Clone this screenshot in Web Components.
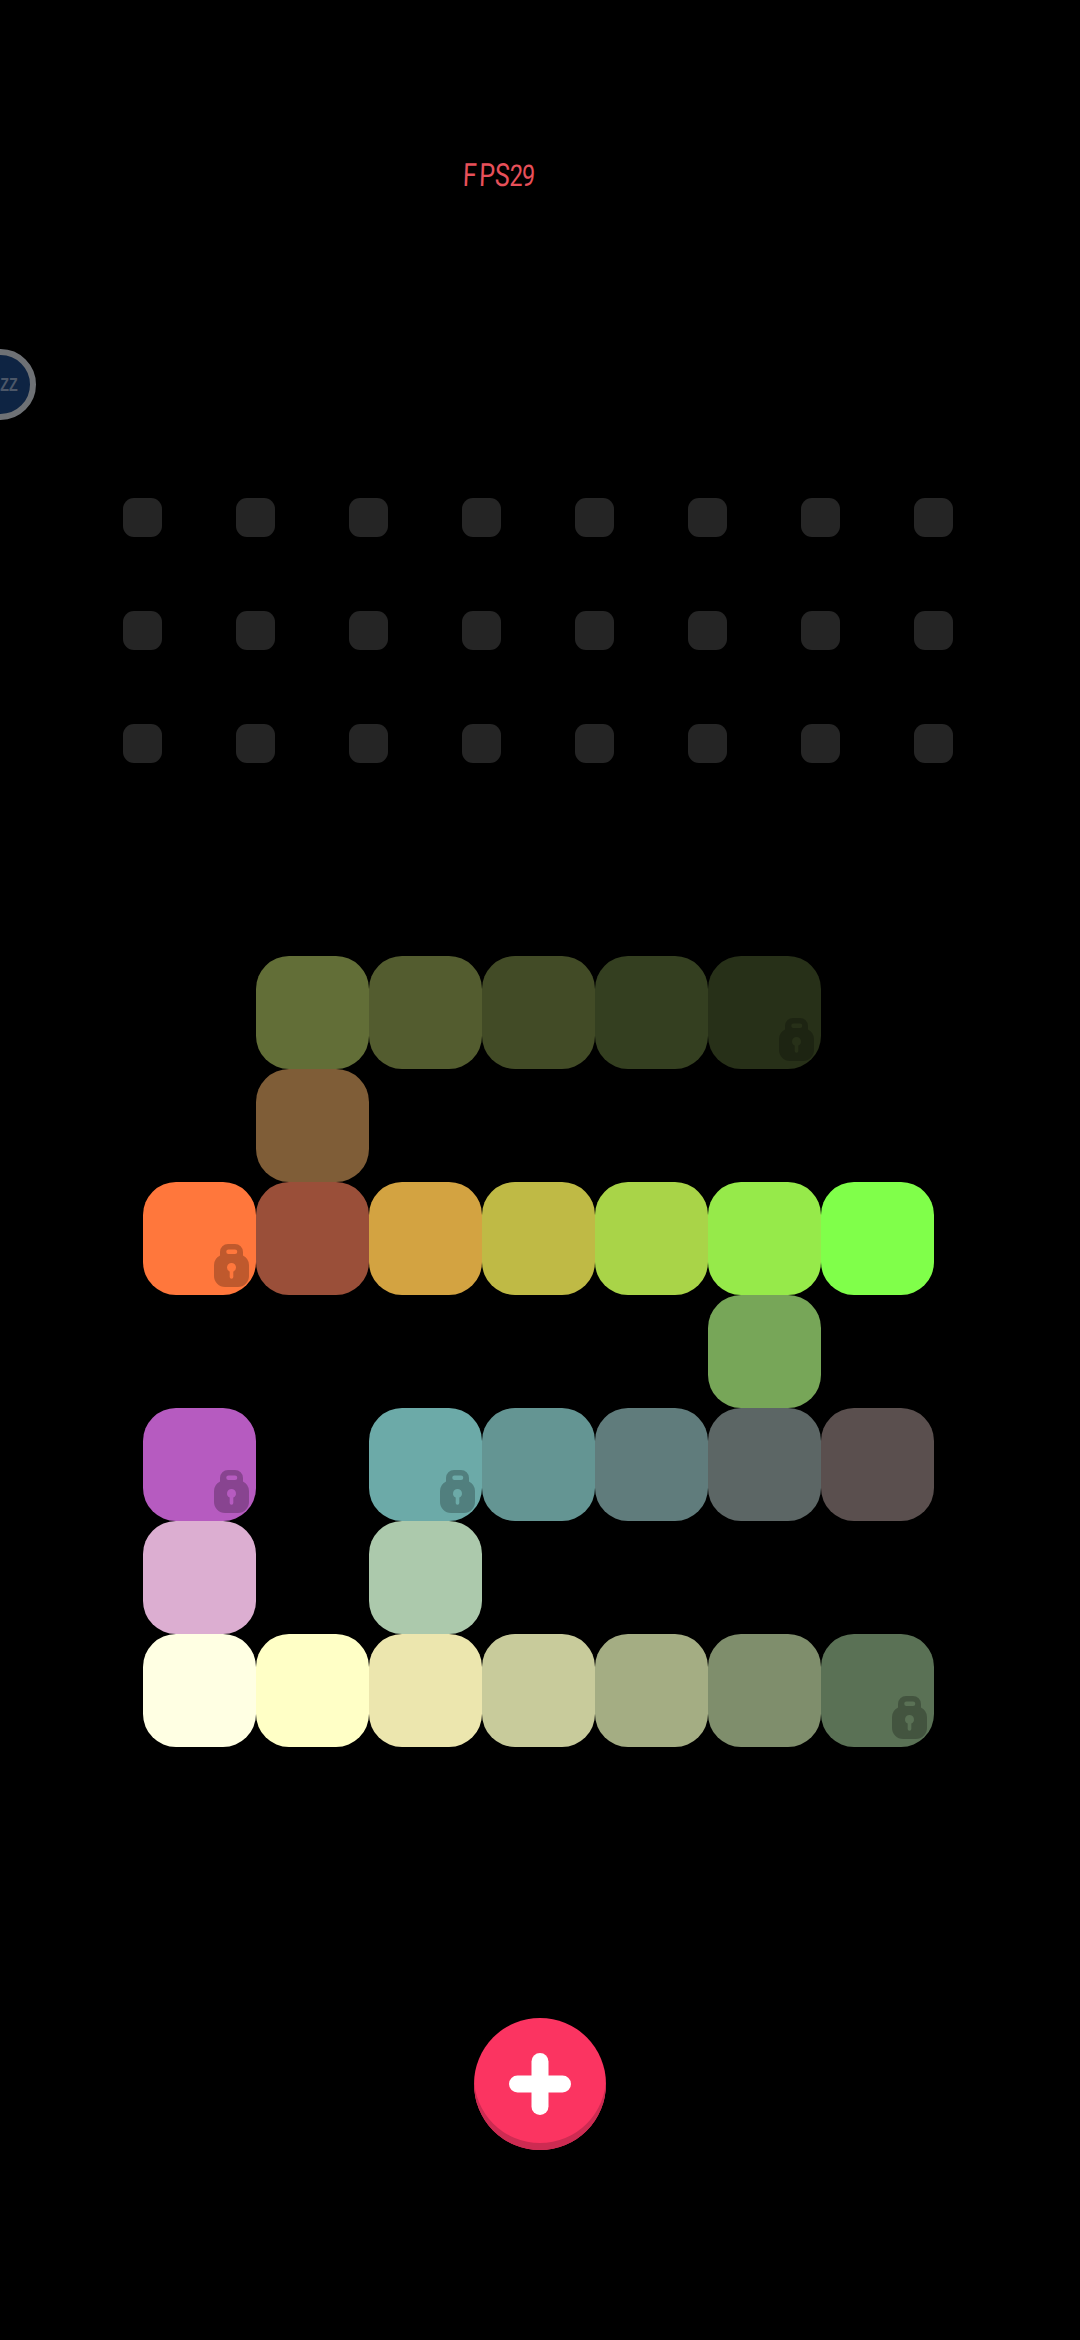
<!DOCTYPE html>
<html>
<head>
<meta charset="utf-8">
<title>Blocks</title>
<style>
html, body { margin: 0; background: #000; }
</style>
</head>
<body>
<app-screen>
    <fps-label value="29"></fps-label>
    <sleep-badge></sleep-badge>
    <dot-grid columns="8" rows="3"></dot-grid>
    <tile-board>
        <game-tile col="1" row="0" color="#626e37"></game-tile>
        <game-tile col="2" row="0" color="#535c2f"></game-tile>
        <game-tile col="3" row="0" color="#424b26"></game-tile>
        <game-tile col="4" row="0" color="#343f20"></game-tile>
        <game-tile col="5" row="0" color="#273018" locked></game-tile>

        <game-tile col="1" row="1" color="#7f5d37"></game-tile>

        <game-tile col="0" row="2" color="#ff773c" locked></game-tile>
        <game-tile col="1" row="2" color="#9a4f39"></game-tile>
        <game-tile col="2" row="2" color="#d3a341"></game-tile>
        <game-tile col="3" row="2" color="#bfba45"></game-tile>
        <game-tile col="4" row="2" color="#a9d448"></game-tile>
        <game-tile col="5" row="2" color="#96ea4a"></game-tile>
        <game-tile col="6" row="2" color="#80ff4a"></game-tile>

        <game-tile col="5" row="3" color="#77a658"></game-tile>

        <game-tile col="0" row="4" color="#b65bc0" locked></game-tile>
        <game-tile col="2" row="4" color="#6caaa8" locked></game-tile>
        <game-tile col="3" row="4" color="#649593"></game-tile>
        <game-tile col="4" row="4" color="#607c7c"></game-tile>
        <game-tile col="5" row="4" color="#5c6665"></game-tile>
        <game-tile col="6" row="4" color="#5a4f4e"></game-tile>

        <game-tile col="0" row="5" color="#dcaed1"></game-tile>
        <game-tile col="2" row="5" color="#acc9ac"></game-tile>

        <game-tile col="0" row="6" color="#ffffe3"></game-tile>
        <game-tile col="1" row="6" color="#ffffc6"></game-tile>
        <game-tile col="2" row="6" color="#ece6ae"></game-tile>
        <game-tile col="3" row="6" color="#c8cb9b"></game-tile>
        <game-tile col="4" row="6" color="#a4ad83"></game-tile>
        <game-tile col="5" row="6" color="#7f8e6c"></game-tile>
        <game-tile col="6" row="6" color="#5a7155" locked></game-tile>
    </tile-board>
    <add-button></add-button>
</app-screen>

<script>
class AppScreen extends HTMLElement {
    constructor() {
        super();
        this.attachShadow({ mode: 'open' }).innerHTML = `
            <style>
            :host {
                display: flex;
                flex-direction: column;
                align-items: flex-start;
                width: 1080px;
                height: 2340px;
                overflow: hidden;
                background: #000;
            }
            </style>
            <slot></slot>
        `;
    }
}

class FpsLabel extends HTMLElement {
    constructor() {
        super();
        this.attachShadow({ mode: 'open' }).innerHTML = `
            <style>
            :host {
                display: block;
                margin: 155px 0 0 463px;
                height: 40px;
                font: 400 32px/40px Roboto, "Liberation Sans", sans-serif;
                color: #e8505a;
                white-space: nowrap;
                transform: scaleX(.78) skewX(-3deg);
                transform-origin: left center;
            }
            .first { margin-right: 3px; }
            .num { font-size: 30px; letter-spacing: -1px; }
            </style>
            <span class="first">F</span><span>PS</span><span class="num"></span>
        `;
        this.shadowRoot.querySelector('.num').textContent = this.getAttribute('value');
    }
}

// sits half off the left edge of the screen, so the text is clipped with it
class SleepBadge extends HTMLElement {
    constructor() {
        super();
        this.attachShadow({ mode: 'open' }).innerHTML = `
            <style>
            :host {
                display: flex;
                align-items: center;
                justify-content: center;
                box-sizing: border-box;
                width: 71px;
                height: 71px;
                margin: 154px 0 0 -35px;
                border: 6px solid #6e7175;
                border-radius: 50%;
                background: #0e2443;
                color: #4c5768;
                font: bold 19px "Liberation Sans", sans-serif;
            }
            span { display: inline-block; transform: scaleX(.75); }
            </style>
            <span>ZZZZ</span>
        `;
    }
}

class DotGrid extends HTMLElement {
    constructor() {
        super();
        const cols = +this.getAttribute('columns');
        const rows = +this.getAttribute('rows');
        this.attachShadow({ mode: 'open' }).innerHTML = `
            <style>
            :host {
                display: grid;
                grid-template-columns: repeat(${cols}, 39px);
                grid-auto-rows: 39px;
                gap: 74px;
                margin: 78px 0 0 123px;
            }
            i { background: #252525; border-radius: 11px; }
            </style>
            ${'<i></i>'.repeat(cols * rows)}
        `;
    }
}

class TileBoard extends HTMLElement {
    constructor() {
        super();
        this.attachShadow({ mode: 'open' }).innerHTML = `
            <style>
            :host {
                display: grid;
                grid-template-columns: repeat(7, 113px);
                grid-template-rows: repeat(7, 113px);
                margin: 193px 0 0 143px;
            }
            </style>
            <slot></slot>
        `;
    }
}

class GameTile extends HTMLElement {
    constructor() {
        super();
        const locked = this.hasAttribute('locked');
        this.attachShadow({ mode: 'open' }).innerHTML = `
            <style>
            :host {
                display: flex;
                align-items: flex-end;
                justify-content: flex-end;
                box-sizing: border-box;
                padding: 0 7px 8px 0;
                border-radius: 33px;
            }
            svg { display: block; }
            </style>
            ${locked ? `
            <svg width="35" height="43" viewBox="0 0 35 43">
                <path fill="#000" fill-opacity=".25" fill-rule="evenodd" d="M14 0h7a8 8 0 0 1 8 8v3.5a11 11 0 0 1 6 9.500v11a11 11 0 0 1-11 11h-13a11 11 0 0 1-11-11v-11a11 11 0 0 1 6-9.500v-3.500a8 8 0 0 1 8-8zM14.500 5.500a1.500 1.500 0 0 0 0 4.500h6.500a1.500 1.500 0 0 0 0-4.500zM17.500 19a4.500 4.500 0 0 0-1.800 8.600v5.400a1.800 1.800 0 0 0 3.600 0v-5.400a4.500 4.500 0 0 0-1.800-8.600z"/>
            </svg>` : ''}
        `;
        this.style.gridColumn = +this.getAttribute('col') + 1;
        this.style.gridRow = +this.getAttribute('row') + 1;
        this.style.background = this.getAttribute('color');
    }
}

class AddButton extends HTMLElement {
    constructor() {
        super();
        this.attachShadow({ mode: 'open' }).innerHTML = `
            <style>
            :host {
                display: flex;
                align-items: center;
                justify-content: center;
                width: 132px;
                height: 132px;
                margin: 271px 0 0 474px;
                border-radius: 50%;
                background: #fb3461;
                box-shadow: inset 0 -7px 0 #cd2b52;
                cursor: pointer;
            }
            svg { display: block; }
            </style>
            <svg width="64" height="64" viewBox="0 0 64 64">
                <rect x="1" y="23.500" width="62" height="17" rx="8.500" fill="#fff"/>
                <rect x="23.500" y="1" width="17" height="62" rx="8.500" fill="#fff"/>
            </svg>
        `;
    }
}

customElements.define('app-screen', AppScreen);
customElements.define('fps-label', FpsLabel);
customElements.define('sleep-badge', SleepBadge);
customElements.define('dot-grid', DotGrid);
customElements.define('tile-board', TileBoard);
customElements.define('game-tile', GameTile);
customElements.define('add-button', AddButton);
</script>
</body>
</html>
